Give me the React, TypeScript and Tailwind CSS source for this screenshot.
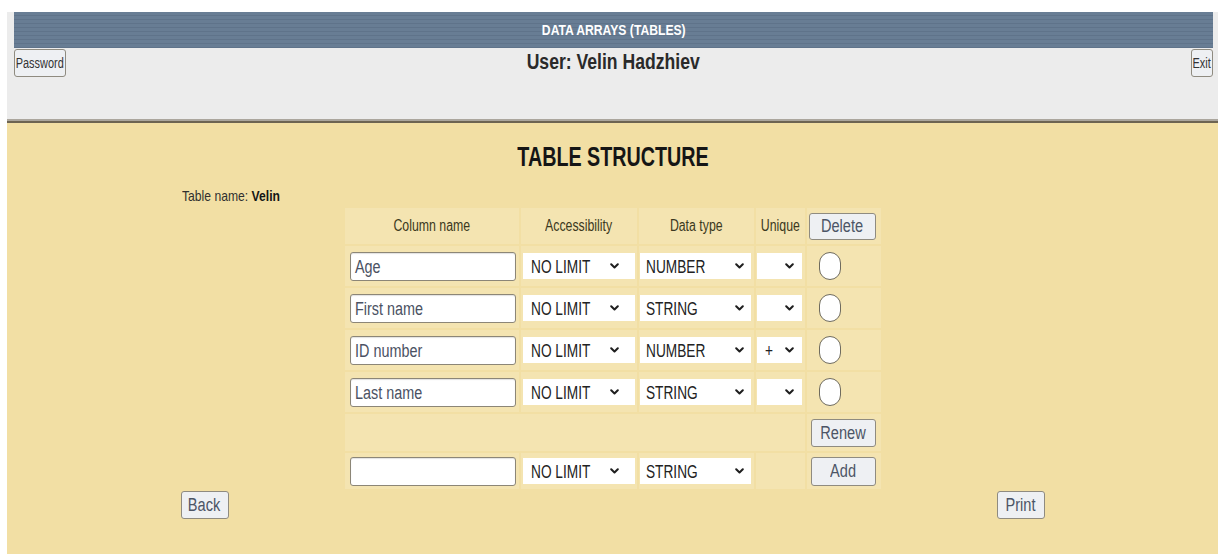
import React from "react";

const FONT = "font-['Liberation_Sans',Arial,sans-serif]";

type Field = { name: string; access: string; type: string; unique: string };

const fields: Field[] = [
  { name: "Age", access: "NO LIMIT", type: "NUMBER", unique: "" },
  { name: "First name", access: "NO LIMIT", type: "STRING", unique: "" },
  { name: "ID number", access: "NO LIMIT", type: "NUMBER", unique: "+" },
  { name: "Last name", access: "NO LIMIT", type: "STRING", unique: "" },
];

// Narrowed text: the UI uses a condensed face, so glyphs are squeezed horizontally.
function N({ children, className }: { children?: React.ReactNode; className: string }) {
  return <span className={`inline-block whitespace-nowrap ${className}`}>{children}</span>;
}

function Chevron() {
  return (
    <svg width="9" height="6" viewBox="0 0 9 6" className="shrink-0">
      <path d="M1.2 1.2 L4.5 4.5 L7.8 1.2" fill="none" stroke="#1e1e1e" strokeWidth="2" strokeLinecap="round" strokeLinejoin="round" />
    </svg>
  );
}

function FakeSelect({ value, box }: { value: string; box: string }) {
  return (
    <div className={`${box} h-[26px] bg-white flex items-center justify-between text-[18px] text-[#222] leading-none`}>
      <N className="scale-x-[0.76] origin-left translate-y-[1px]">{value}</N>
      <Chevron />
    </div>
  );
}

function TextBox({ value }: { value: string }) {
  return (
    <div className="w-[166px] h-[29px] bg-white border border-[#8c8677] rounded-[3px] shadow-[inset_0_1px_1px_rgba(0,0,0,0.12)] flex items-center px-[4px] text-[18px] text-[#4b5263] leading-none">
      <N className="scale-x-[0.8] origin-left translate-y-[1px]">{value}</N>
    </div>
  );
}

function Btn({ label, className, text }: { label: string; className: string; text: string }) {
  return (
    <button
      className={`${className} bg-[#eef0f3] border border-[#8f8b80] rounded-[3px] text-[#4c5566] leading-none flex items-center justify-center overflow-visible`}
    >
      <N className={`${text} origin-center`}>{label}</N>
    </button>
  );
}

function Radio() {
  return <div className="w-[22px] h-[28px] rounded-full bg-white border-[1.5px] border-[#6f6b5e]" />;
}

function Cell({ children, className = "" }: { children?: React.ReactNode; className?: string }) {
  return <div className={`bg-[#f4e4b1] flex items-center ${className}`}>{children}</div>;
}

export default function App() {
  return (
    <div className={`${FONT} w-[1218px] h-[554px] bg-white pt-[12px] pl-[7px] flex flex-col overflow-hidden`}>
      {/* top header: title bar and user line */}
      <div className="bg-[#ececec] pl-[7px] pr-[5px] h-[107px] flex flex-col">
        <div className="h-[36px] bg-[repeating-linear-gradient(to_bottom,#687d94_0px,#687d94_3px,#5f738a_3px,#5f738a_4px)] flex items-center justify-center text-white font-bold text-[15px]">
          <N className="scale-x-[0.81]">DATA ARRAYS (TABLES)</N>
        </div>
        <div className="grid grid-cols-[1fr_auto_1fr] items-start pt-[1px]">
          <div>
            <Btn label="Password" className="h-[28px] w-[52px] text-[14px]" text="scale-x-[0.78] text-[#333]" />
          </div>
          <div className="text-[22px] font-bold text-[#2a2a2a] leading-[26px]">
            <N className="scale-x-[0.8]">User: Velin Hadzhiev</N>
          </div>
          <div className="flex justify-end">
            <Btn label="Exit" className="h-[28px] w-[22px] text-[14px]" text="scale-x-[0.78] text-[#333]" />
          </div>
        </div>
      </div>
      <div className="h-[2px] bg-[#aba69d]" />
      <div className="h-[2px] bg-[#6d6452]" />

      {/* table structure body */}
      <div className="flex-1 bg-[#f2dfa4] flex justify-center">
        <div className="w-[868px] flex flex-col pt-[18px]">
          <h1 className="text-center text-[27px] font-bold text-[#151515] leading-[32px]">
            <N className="scale-x-[0.73]">TABLE STRUCTURE</N>
          </h1>
          <div className="mt-[14px] text-[15px] leading-[18px] text-[#2f2f2f] pl-[3px]">
            <N className="scale-x-[0.81] origin-left">
              Table name: <b className="text-[#151515]">Velin</b>
            </N>
          </div>

          <div className="mt-[3px] self-center grid grid-cols-[174px_116px_115px_49px_74px] grid-rows-[36px_40px_40px_40px_40px_37px_36px] gap-[2px] text-[16px] text-[#3b3820]">
            <Cell className="justify-center">
              <N className="scale-x-[0.77]">Column name</N>
            </Cell>
            <Cell className="justify-center">
              <N className="scale-x-[0.77]">Accessibility</N>
            </Cell>
            <Cell className="justify-center">
              <N className="scale-x-[0.77]">Data type</N>
            </Cell>
            <Cell className="justify-center">
              <N className="scale-x-[0.77]">Unique</N>
            </Cell>
            <Cell className="pl-[2px]">
              <Btn label="Delete" className="w-[67px] h-[27px] text-[18px]" text="scale-x-[0.81]" />
            </Cell>

            {fields.map((f) => (
              <React.Fragment key={f.name}>
                <Cell className="pl-[5px]">
                  <TextBox value={f.name} />
                </Cell>
                <Cell className="pl-[2px]">
                  <FakeSelect value={f.access} box="w-[112px] pl-[8px] pr-[16px]" />
                </Cell>
                <Cell className="pl-[1px]">
                  <FakeSelect value={f.type} box="w-[111px] pl-[6px] pr-[7px]" />
                </Cell>
                <Cell className="pl-[1px]">
                  <FakeSelect value={f.unique} box="w-[45px] pl-[8px] pr-[8px]" />
                </Cell>
                <Cell className="pl-[12px]">
                  <Radio />
                </Cell>
              </React.Fragment>
            ))}

            <Cell className="col-span-4" />
            <Cell className="pl-[4px]">
              <Btn label="Renew" className="w-[65px] h-[28px] text-[18px]" text="scale-x-[0.81]" />
            </Cell>

            <Cell className="pl-[5px]">
              <TextBox value="" />
            </Cell>
            <Cell className="pl-[2px]">
              <FakeSelect value="NO LIMIT" box="w-[112px] pl-[8px] pr-[16px]" />
            </Cell>
            <Cell className="pl-[1px]">
              <FakeSelect value="STRING" box="w-[111px] pl-[6px] pr-[7px]" />
            </Cell>
            <Cell />
            <Cell className="pl-[4px]">
              <Btn label="Add" className="w-[65px] h-[29px] text-[18px]" text="scale-x-[0.81]" />
            </Cell>
          </div>

          <div className="mt-[2px] flex justify-between px-[2px]">
            <Btn label="Back" className="w-[48px] h-[28px] text-[18px]" text="scale-x-[0.81]" />
            <Btn label="Print" className="w-[48px] h-[28px] text-[18px]" text="scale-x-[0.81]" />
          </div>
        </div>
      </div>
    </div>
  );
}
